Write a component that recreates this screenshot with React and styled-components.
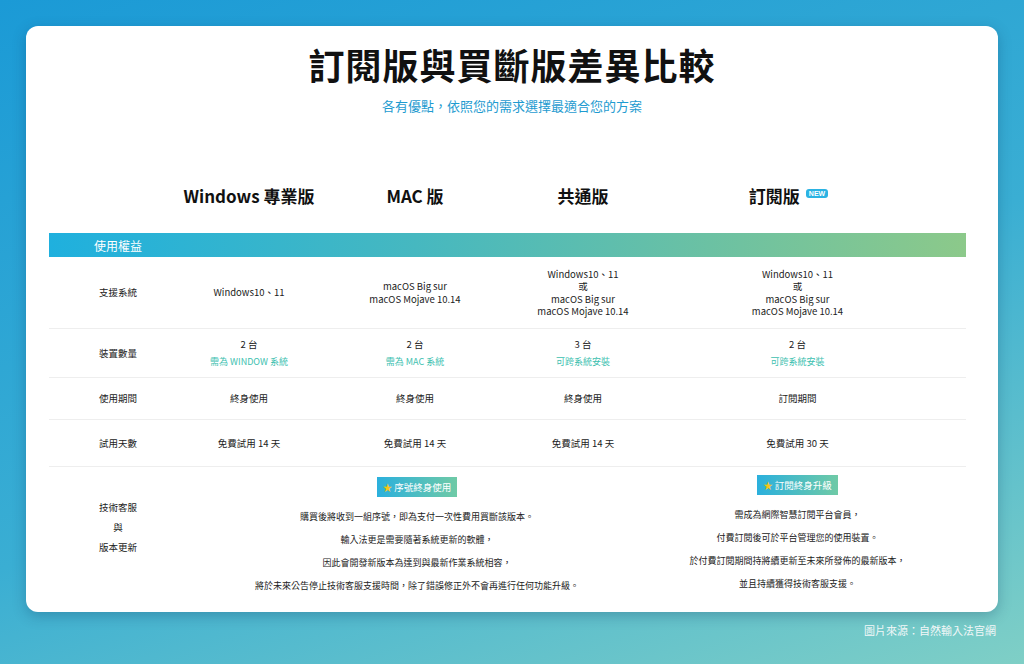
import React from "react";
import styled, { createGlobalStyle } from "styled-components";

const G = createGlobalStyle`
  html,body{margin:0;padding:0;}
  body{width:1024px;height:664px;overflow:hidden;font-family:"Noto Sans CJK TC","Noto Sans",sans-serif;
    background:linear-gradient(160deg,#1b9ad6 0%,#3aaed3 55%,#7fcfc6 100%);}
`;
const Page = styled.div`padding:26px 26px 0 26px;height:664px;box-sizing:border-box;position:relative;`;
const Card = styled.div`background:#fff;border-radius:12px;height:586px;box-sizing:border-box;padding:20px 32px 0 23px;
  box-shadow:0 4px 14px rgba(0,40,80,.25);`;
const Title = styled.h1`margin:0;text-align:center;font-size:36px;font-weight:700;color:#111;line-height:1;margin-left:9px;letter-spacing:1px;`;
const Sub = styled.div`text-align:center;color:#1e9bd0;font-size:13px;margin-top:14px;margin-left:9px;`;
const Grid = styled.div`display:grid;grid-template-columns:138px 124px 208px 128px 1fr;margin-top:68px;`;
const Head = styled.div`text-align:center;font-size:17px;font-weight:700;color:#111;height:50px;display:flex;justify-content:center;align-items:flex-start;gap:6px;white-space:nowrap;padding-right:${p=>p.pr||0}px;`;
const New = styled.span`background:#2bb3e3;color:#fff;font-size:7px;border-radius:3px;padding:1px 3px;margin-top:6px;font-family:"Liberation Sans",sans-serif;`;
const Band = styled.div`grid-column:1/-1;height:24px;background:linear-gradient(90deg,#1fb0de,#46b8c0 40%,#8cc98a);color:#fff;font-size:12px;display:flex;align-items:center;padding-left:45px;`;
const Cell = styled.div`height:${p=>p.h}px;border-bottom:1px solid #eee;display:flex;flex-direction:column;justify-content:center;align-items:center;text-align:center;font-size:9.5px;color:#222;line-height:12.5px;padding-right:${p=>p.pr||0}px;`;
const Note = styled.div`color:#3dbfb0;font-size:9px;margin-top:6px;`;
const Last = styled.div`display:flex;flex-direction:column;align-items:center;padding-top:${p=>p.pt||10}px;padding-right:${p=>p.pr||0}px;grid-column:${p=>p.span||"auto"};font-size:9px;color:#222;`;
const Badge = styled.div`background:linear-gradient(90deg,#2bb0dd,#6fcaa6);color:#fff;font-size:9.5px;padding:3px 6px;margin-bottom:8px;display:flex;align-items:center;gap:2px;`;
const Line = styled.div`height:23px;line-height:23px;`;
const Lbl = styled.div`display:flex;flex-direction:column;align-items:center;justify-content:center;font-size:9.5px;color:#222;height:120px;gap:8px;line-height:12px;`;
const Src = styled.div`position:absolute;right:28px;bottom:26px;color:#f2f7f8;font-size:11px;`;
const StarMark = styled.span`color:#f5c518;`;

const rows=[
 ["支援系統",71,["Windows10、11"],["macOS Big sur","macOS Mojave 10.14"],["Windows10、11","或","macOS Big sur","macOS Mojave 10.14"],["Windows10、11","或","macOS Big sur","macOS Mojave 10.14"]],
 ["裝置數量",48,["2 台","*需為 WINDOW 系統"],["2 台","*需為 MAC 系統"],["3 台","*可跨系統安裝"],["2 台","*可跨系統安裝"]],
 ["使用期間",41,["終身使用"],["終身使用"],["終身使用"],["訂閱期間"]],
 ["試用天數",46,["免費試用 14 天"],["免費試用 14 天"],["免費試用 14 天"],["免費試用 30 天"]],
];
export default function App(){
 return <Page><G/><Card>
  <Title>訂閱版與買斷版差異比較</Title>
  <Sub>各有優點，依照您的需求選擇最適合您的方案</Sub>
  <Grid>
   <Head/><Head>Windows 專業版</Head><Head>MAC 版</Head><Head>共通版</Head><Head pr={36}>訂閱版<New>NEW</New></Head>
   <Band>使用權益</Band>
   {rows.map(r=>[
     <Cell key={r[0]} h={r[1]}>{r[0]}</Cell>,
     ...r.slice(2).map((c,i)=><Cell key={r[0]+i} h={r[1]} pr={i===3?18:0}>{c.map((t,j)=>t.startsWith("*")?<Note key={j}>{t.slice(1)}</Note>:<div key={j}>{t}</div>)}</Cell>)
   ])}
   <Lbl><div>技術客服</div><div>與</div><div>版本更新</div></Lbl>
   <Last span="2/5"><Badge><StarMark>★</StarMark>序號終身使用</Badge>
     <Line>購買後將收到一組序號，即為支付一次性費用買斷該版本。</Line>
     <Line>輸入法更是需要隨著系統更新的軟體，</Line>
     <Line>因此會開發新版本為達到與最新作業系統相容，</Line>
     <Line>將於未來公告停止技術客服支援時間，除了錯誤修正外不會再進行任何功能升級。</Line></Last>
   <Last pr={18} pt={8}><Badge><StarMark>★</StarMark>訂閱終身升級</Badge>
     <Line>需成為網際智慧訂閱平台會員，</Line>
     <Line>付費訂閱後可於平台管理您的使用裝置。</Line>
     <Line>於付費訂閱期間持將續更新至未來所發佈的最新版本，</Line>
     <Line>並且持續獲得技術客服支援。</Line></Last>
  </Grid>
 </Card><Src>圖片來源：自然輸入法官網</Src></Page>;
}
